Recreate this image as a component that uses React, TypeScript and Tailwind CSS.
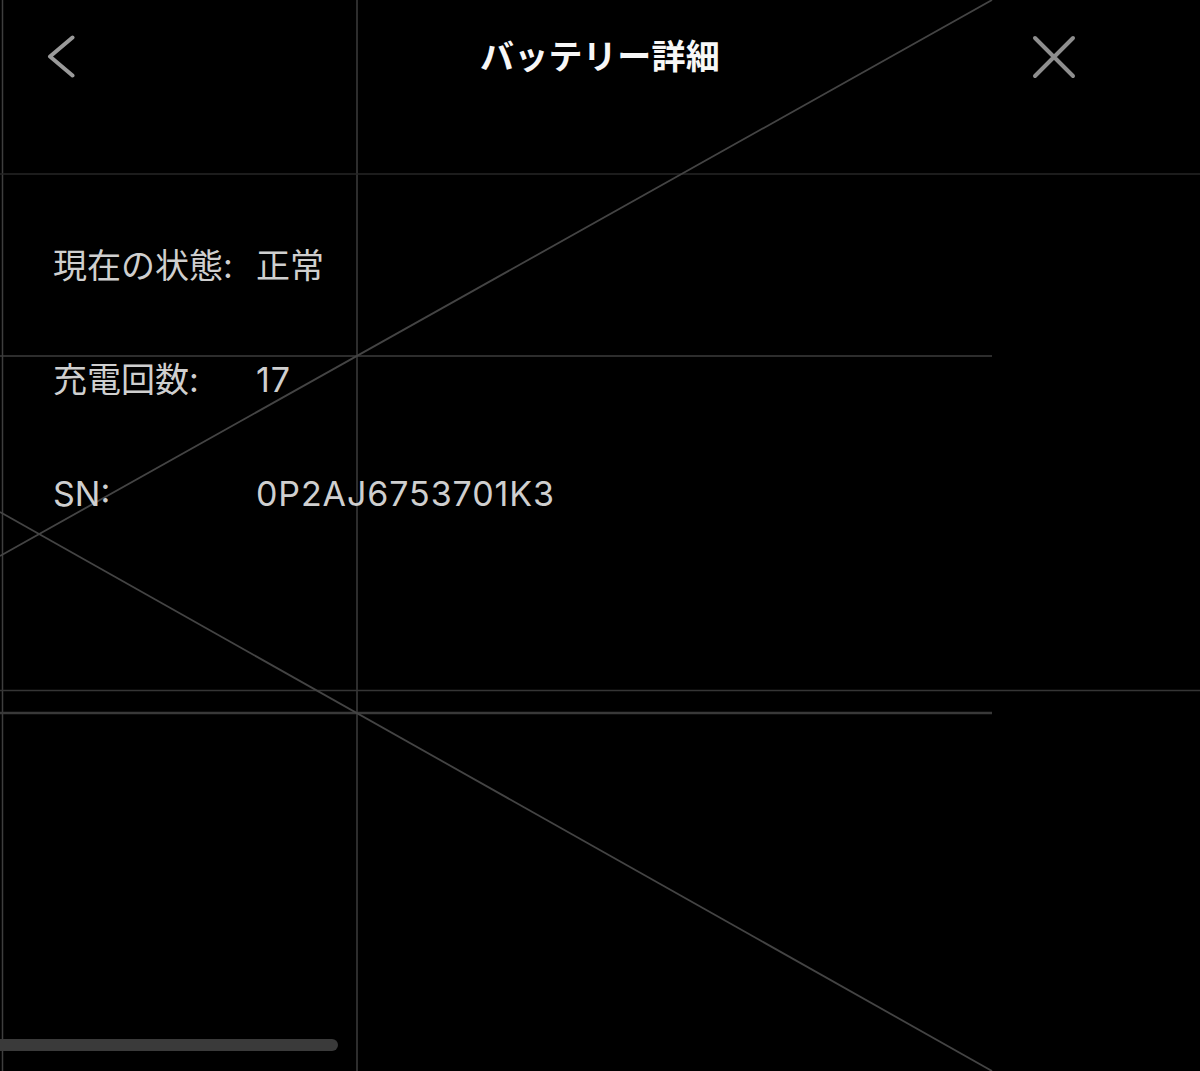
import React from "react";

const FONT = "font-['Inter','Noto_Sans_CJK_JP',sans-serif]";

function GridOverlay() {
  return (
    <svg
      className="absolute inset-0 pointer-events-none"
      width="1200"
      height="1071"
      viewBox="0 0 1200 1071"
    >
      <line x1="2.5" y1="0" x2="2.5" y2="1071" stroke="#3e3e3e" strokeWidth="1.5" />
      <line x1="357" y1="0" x2="357" y2="1071" stroke="#3c3c3c" strokeWidth="1.5" />
      <line x1="0" y1="174" x2="1200" y2="174" stroke="#262626" strokeWidth="1.5" />
      <line x1="0" y1="356" x2="992" y2="356" stroke="#3c3c3c" strokeWidth="1.5" />
      <line x1="0" y1="690.5" x2="1200" y2="690.5" stroke="#353535" strokeWidth="1.5" />
      <line x1="0" y1="713" x2="992" y2="713" stroke="#393939" strokeWidth="2.5" />
      <line x1="992" y1="0" x2="0" y2="556" stroke="#444" strokeWidth="1.8" />
      <line x1="0" y1="512" x2="992" y2="1071" stroke="#444" strokeWidth="1.8" />
    </svg>
  );
}

function Row({ label, value, latin }: { label: string; value: string; latin?: boolean }) {
  return (
    <div className="flex h-[114px] items-center">
      <div className="w-[203px] text-[34px] leading-none text-[#cfcfcf]">{label}</div>
      <div
        className={
          latin
            ? "text-[34px] leading-none tracking-[0.9px] text-[#cfcfcf]"
            : "text-[34px] leading-none text-[#cfcfcf]"
        }
      >
        {value}
      </div>
    </div>
  );
}

export default function App() {
  return (
    <div className={`relative h-[1071px] w-[1200px] overflow-hidden bg-black ${FONT}`}>
      <GridOverlay />
      <div className="relative flex flex-col">
        <header className="grid h-[114px] grid-cols-[1fr_auto_1fr] items-center">
          <div className="flex pl-[46px]">
            <svg width="30" height="44" viewBox="0 0 30 44" fill="none">
              <path
                d="M26.5 2.5 L4 21.5 L26.5 40.5"
                stroke="#9a9a9a"
                strokeWidth="4"
                strokeLinecap="round"
                strokeLinejoin="round"
              />
            </svg>
          </div>
          <h1 className="text-[34px] font-semibold leading-none tracking-[0.3px] text-[#f7f7f7]">
            バッテリー詳細
          </h1>
          <div className="flex justify-end pr-[124px]">
            <svg width="44" height="44" viewBox="0 0 44 44" fill="none">
              <path
                d="M3 3 L41 41 M41 3 L3 41"
                stroke="#8e8e8e"
                strokeWidth="4"
                strokeLinecap="round"
              />
            </svg>
          </div>
        </header>
        <div className="mt-[95px] flex flex-col pl-[53px]">
          <Row label="現在の状態:" value="正常" />
          <Row label="充電回数:" value="17" latin />
          <Row label="SN:" value="0P2AJ6753701K3" latin />
        </div>
      </div>
      <div className="absolute left-0 top-[1039px] h-[12px] w-[338px] rounded-r-full bg-[#3a3a3a]" />
    </div>
  );
}
